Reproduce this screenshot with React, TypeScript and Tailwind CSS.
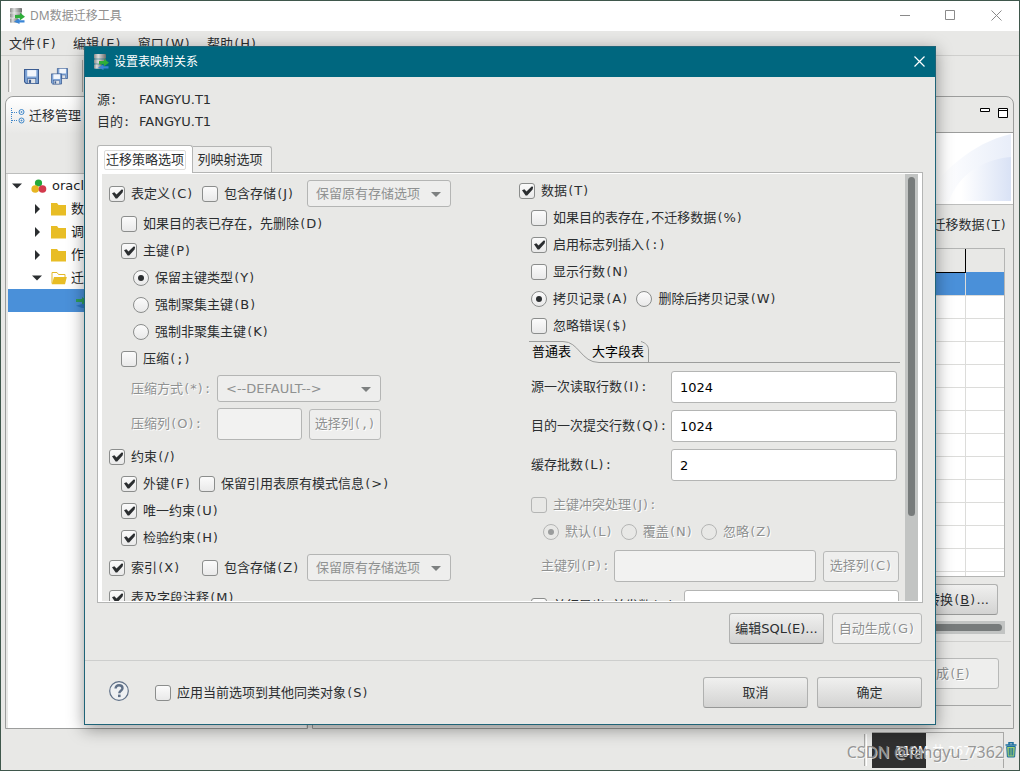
import React from "react";

/* Text with half-width punctuation set in the monospaced face. */
function T({ s, u }: { s: string; u?: boolean }) {
  return (
    <span className="whitespace-nowrap">
      {s.split(/([():,;]+)/).map((part, i) =>
        /^[():,;]+$/.test(part) ? (
          <span key={i} className="font-['DejaVu_Sans_Mono',monospace] text-[12px]">{part}</span>
        ) : u && /^[A-Z]$/.test(part) ? (
          <span key={i} className="underline">{part}</span>
        ) : (
          <React.Fragment key={i}>{part}</React.Fragment>
        )
      )}
    </span>
  );
}

const dim = "text-[#8f9191] [text-shadow:1px_1px_0_#fff]";

type BoxProps = { s: string; on?: boolean; off?: boolean; name?: string; className?: string };

function Check({ s, on, off, className = "" }: BoxProps) {
  return (
    <label className={`flex h-[27px] shrink-0 items-center gap-[6px] ${off ? dim : ""} ${className}`}>
      <span className="relative h-4 w-4 shrink-0">
        <input
          type="checkbox"
          defaultChecked={on}
          disabled={off}
          className="peer block h-4 w-4 appearance-none rounded-[3px] border border-[#8b8d8c] bg-linear-to-b from-[#fbfbfb] to-[#e9e9e9] disabled:border-[#b4b5b4] disabled:bg-none"
        />
        <svg viewBox="0 0 16 16" className="pointer-events-none absolute inset-0 hidden h-4 w-4 peer-checked:block">
          <path d="M3 7.200 L5.400 6.200 L7.500 8.400 L12.600 3.600 L14.200 3.800 L13.600 6.400 L8.200 12.600 L6.600 12.600 Z" fill="#2b2e30" />
        </svg>
      </span>
      <T s={s} />
    </label>
  );
}

function Radio({ s, on, off, name, className = "" }: BoxProps) {
  return (
    <label className={`flex h-[27px] shrink-0 items-center gap-[6px] ${off ? dim : ""} ${className}`}>
      <span className="relative h-4 w-4 shrink-0">
        <input
          type="radio"
          name={name}
          defaultChecked={on}
          disabled={off}
          className="peer block h-4 w-4 appearance-none rounded-full border border-[#8b8d8c] bg-linear-to-b from-[#fbfbfb] to-[#e9e9e9] disabled:border-[#b4b5b4] disabled:bg-none"
        />
        <span className="pointer-events-none absolute inset-[5px] hidden rounded-full bg-[#2b2e30] peer-checked:block peer-disabled:bg-[#9a9c9c]" />
      </span>
      <T s={s} />
    </label>
  );
}

function Combo({ value, label, id, className }: { value: string; label?: string; id?: string; className: string }) {
  return (
    <span className={`relative block h-[27px] ${className}`}>
      <select
        id={id}
        aria-label={label}
        disabled
        className="block h-full w-full appearance-none rounded-[3px] border border-[#b4b5b4] bg-[#eeeeed] pl-2 text-[13px] text-[#8f9191] opacity-100"
      >
        <option>{value}</option>
      </select>
      <svg viewBox="0 0 10 5" className="pointer-events-none absolute top-[12px] right-[10px] h-[5px] w-[10px]">
        <path d="M0 0h10L5 5z" fill="#7d8080" />
      </svg>
    </span>
  );
}

function Btn({ children, off, className = "" }: { children: React.ReactNode; off?: boolean; className?: string }) {
  return (
    <button
      type="button"
      disabled={off}
      className={`flex h-[31px] shrink-0 items-center justify-center rounded-[3px] border ${
        off
          ? `border-[#b8b9b8] bg-[#eeeeed] ${dim}`
          : "border-[#b0b1b0] border-b-[#979897] bg-linear-to-b from-[#f0f0ef] to-[#d3d3d2] text-[#2b2e30]"
      } ${className}`}
    >
      {children}
    </button>
  );
}

function Field({ id, label, value }: { id: string; label: string; value: string }) {
  return (
    <div className="flex h-8 items-center">
      <label htmlFor={id} className="w-[140px] shrink-0"><T s={label} /></label>
      <input id={id} defaultValue={value} className="h-8 w-[226px] rounded-[3px] border border-[#b4b5b4] bg-white px-2 text-black" />
    </div>
  );
}

function Logo() {
  return (
    <svg viewBox="0 0 16 16" className="h-4 w-4 shrink-0">
      <defs>
        <linearGradient id="metal" x1="0" x2="1" y1="0" y2="0">
          <stop offset="0" stopColor="#8b8d8c" />
          <stop offset=".35" stopColor="#dcdddd" />
          <stop offset="1" stopColor="#6a6c6b" />
        </linearGradient>
      </defs>
      <rect x="1" y="0" width="12" height="4.800" rx=".8" fill="url(#metal)" />
      <rect x="1" y="5.200" width="12" height="4.600" rx=".8" fill="url(#metal)" />
      <rect x="1" y="10.200" width="8" height="4.600" rx=".8" fill="url(#metal)" />
      <path d="M6 7h5V4.800L16 8.800 11 12.200V10.200H6z" fill="#2fae3a" />
      <path d="M15.500 12.200h-5V10.400L5 13.400l5.500 2.600v-1.400h5z" fill="#3b86d6" />
    </svg>
  );
}

function Disk({ x, y, k }: { x: number; y: number; k: number }) {
  return (
    <g transform={`translate(${x} ${y}) scale(${k})`}>
      <path d="M.5.5h13v13H2L.5 12z" fill="#7ea4d6" stroke="#3c5d92" />
      <rect x="3" y="1" width="8.500" height="6" fill="#f2f6fc" />
      <rect x="3.500" y="9" width="7.500" height="4.500" fill="#dfe3e8" stroke="#3c5d92" strokeWidth=".6" />
      <rect x="4.600" y="10" width="2" height="3" fill="#3c5d92" />
    </g>
  );
}

function Folder({ open }: { open?: boolean }) {
  return (
    <svg viewBox="0 0 16 14" className="h-[14px] w-4 shrink-0">
      {open ? (
        <>
          <path d="M1 12.500V1.500h5l1.500 2H14v2.500" fill="#fff" stroke="#e3b92a" />
          <path d="M3 6h12.800L14 13.200H.8z" fill="#e8bd25" />
        </>
      ) : (
        <path d="M0 1h6l1.500 2H15v10.500H0z" fill="#e8bd25" />
      )}
    </svg>
  );
}

function TreeRow({ name, open, indent, icon }: { name: string; open?: boolean; indent?: boolean; icon: React.ReactNode }) {
  return (
    <li className={`flex h-[23px] items-center text-[#1c1e1f] ${indent ? "pl-6" : "pl-1"}`}>
      <svg viewBox="0 0 10 10" className="h-[10px] w-[10px] shrink-0">
        {open ? <path d="M0 2.500h10L5 7.500z" fill="#2b2e30" /> : <path d="M3 0v10l5-5z" fill="#2b2e30" />}
      </svg>
      <span className="ml-[9px] flex items-center gap-1">
        {icon}
        <span className="whitespace-nowrap">{name}</span>
      </span>
    </li>
  );
}

function MainWindow() {
  return (
    <div className="flex min-h-screen flex-col border border-[#3f574c] bg-[#e8e8e6]">
      <header className="flex h-[30px] items-center bg-white pl-2 text-[12px] text-[#8f8f8f]">
        <Logo />
        <span className="ml-[5px] flex-1 font-['Noto_Sans','Noto_Sans_CJK_SC',sans-serif]">DM数据迁移工具</span>
        <svg viewBox="0 0 102 12" className="mr-[17px] h-3 w-[102px]" fill="none" stroke="#8a8a8a">
          <path d="M0 5.500h10M45.500 .5h9v9h-9zM91.500 .5l10 10M101.500 .5l-10 10" />
        </svg>
      </header>
      <nav className="flex h-[25px] items-center gap-4 border-b border-[#cfcfcd] pt-px pl-2">
        {["文件(F)", "编辑(E)", "窗口(W)", "帮助(H)"].map((m) => (
          <a key={m} href="#" className="text-[#2b2e30]"><T s={m} /></a>
        ))}
      </nav>
      <div className="flex h-10 items-center pl-[7px]">
        <span className="h-8 w-[3px] border-r border-l border-r-white border-l-[#a8a8a6]" />
        <button type="button" aria-label="保存" className="ml-[13px]">
          <svg viewBox="0 0 14 14" className="h-[15px] w-[15px]"><Disk x={0} y={0} k={1} /></svg>
        </button>
        <button type="button" aria-label="全部保存" className="ml-3">
          <svg viewBox="0 0 17 17" className="h-[17px] w-[17px]"><Disk x={6} y={0} k={0.78} /><Disk x={0} y={5.5} k={0.78} /></svg>
        </button>
        <span className="ml-[14px] h-8 w-[3px] border-r border-l border-r-white border-l-[#a8a8a6]" />
      </div>

      <main className="flex flex-1 gap-1 pr-[5px] pl-1">
        <aside className="flex w-[303px] shrink-0 flex-col rounded-tl-[8px] border border-[#9c9d9c]">
          <div className="flex h-[37px] shrink-0 items-center gap-1 rounded-tl-[8px] bg-linear-to-b from-white to-[#e8e8e6] pl-1">
            <svg viewBox="0 0 15 16" className="h-4 w-[15px] shrink-0" fill="none" stroke="#3f87c9">
              <path d="M1.500 0v15M2 4.500h6M2 12.500h6" strokeDasharray="1 1" />
              <circle cx="11.500" cy="4" r="2.500" />
              <circle cx="11.500" cy="12.500" r="2.500" />
              <path d="M10.500 4h2M11.500 3v2M10.500 12.500h2M11.500 11.500v2" strokeWidth=".7" />
            </svg>
            <span>迁移管理</span>
          </div>
          <div className="h-10 shrink-0 border-b border-[#bdbebd]" />
          <ul className="mr-px ml-[2px] flex-1 bg-white">
            <TreeRow
              name="oracle"
              open
              icon={
                <svg viewBox="0 0 16 16" className="mr-px h-4 w-4 shrink-0">
                  <circle cx="7.500" cy="5" r="3.600" fill="#24a83b" />
                  <circle cx="4.200" cy="11" r="3.800" fill="#e6b522" />
                  <circle cx="11.500" cy="11" r="3.800" fill="#d33a4c" />
                </svg>
              }
            />
            <TreeRow name="数据" indent icon={<Folder />} />
            <TreeRow name="调度" indent icon={<Folder />} />
            <TreeRow name="作业" indent icon={<Folder />} />
            <TreeRow name="迁移" indent open icon={<Folder open />} />
            <li className="flex h-[23px] items-center bg-[#4a90d9] pl-16">
              <svg viewBox="0 0 16 16" className="h-4 w-4 shrink-0">
                <path d="M4 6h6V4l6 4.500-6 3V9H4z" fill="#2f9e5a" />
                <path d="M15 11h-5l-6 1.800 6 2.200h5z" fill="#2f78c4" />
              </svg>
            </li>
          </ul>
        </aside>

        <section className="flex min-w-0 flex-1 flex-col rounded-tr-[8px] border border-[#9c9d9c]">
          <div className="flex h-9 shrink-0 items-center justify-end border-b border-[#9c9d9c] pr-[5px] pb-[3px]">
            <svg viewBox="0 0 28 12" className="h-3 w-7" fill="#fff" stroke="#000">
              <path d="M.5 1.500h9v3h-9zM18.500 1.500h9v9h-9zM18.500 3.500h9" />
            </svg>
          </div>
          <div className="flex h-[72px] shrink-0 justify-end border-b border-[#bdbebd] bg-white pr-[2px]">
            <svg viewBox="0 0 90 68" className="h-[68px] w-[90px]">
              <defs>
                <linearGradient id="sweep" x1="0" x2="1">
                  <stop offset=".2" stopColor="#fff" />
                  <stop offset="1" stopColor="#d9e2f5" />
                </linearGradient>
              </defs>
              <path d="M0 68C20 40 50 10 90 1V68z" fill="url(#sweep)" opacity=".6" />
              <path d="M28 68C38 40 64 26 90 24V68z" fill="url(#sweep)" />
            </svg>
          </div>
          <div className="flex h-[43px] shrink-0 items-center justify-end pr-[6px] pb-[3px] text-[#2b2e30]"><T s="迁移数据(T)" u /></div>
          <div className="mr-2 ml-1 h-[329px] overflow-hidden border border-[#b4b5b4] bg-white">
            <table className="w-full table-fixed border-collapse">
              <thead>
                <tr className="h-[23px] bg-[#e8e8e6]">
                  <th className="border-r border-b border-black" />
                  <th className="w-[39px]" />
                </tr>
              </thead>
              <tbody>
                {Array.from({ length: 14 }, (_, i) => (
                  <tr key={i} className={`h-[23px] border-b border-[#dcdcda] ${i === 0 ? "bg-[#4a90d9]" : ""}`}>
                    <td className="border-r border-[#dcdcda]" />
                    <td />
                  </tr>
                ))}
              </tbody>
            </table>
          </div>
          <div className="mt-[7px] flex justify-end pr-[15px]"><Btn className="w-20"><T s="转换(B)..." u /></Btn></div>
          <div className="mt-[6px] mr-2 h-[13px] bg-[#c2c4c3] py-[3px] pr-[3px]"><div className="h-[7px] rounded-full bg-[#777b7b]" /></div>
          <div className="mt-[7px] mr-[2px] border-t border-[#cfcfcd]" />
          <div className="mt-4 flex justify-end pr-[14px]"><Btn off className="w-[104px]"><T s="完成(F)" u /></Btn></div>
          <div className="mt-4 mr-[2px] h-[22px] border-t border-[#a5a6a5]" />
        </section>
      </main>

      <footer className="flex h-[41px] items-center justify-end pt-px">
        <span className="mr-[5px] h-8 w-[3px] border-r border-l border-r-white border-l-[#a8a8a6]" />
        <div className="flex h-9 w-[132px] items-center border-t border-r border-[#a8a8a6] bg-linear-to-r from-[#303030] from-[54px] to-[#e8e8e6] to-[54px] pl-[23px] text-[12px] text-white">
          110M 共 267M
        </div>
        <svg viewBox="0 0 12 16" className="mr-[2px] ml-px h-4 w-3" fill="none" stroke="#1d6f9e">
          <path d="M.5 3h11M4 2.500V.8h4v1.700" strokeWidth="1.500" />
          <path d="M1.700 4.500h8.600L9.600 15H2.400z" fill="#9fd06f" />
          <path d="M4.300 6v7.500M6 6v7.500M7.700 6v7.500" />
        </svg>
      </footer>
    </div>
  );
}

function LeftOptions() {
  return (
    <div className="w-[410px] shrink-0 pt-[6px] pl-[7px]">
      <div className="flex">
        <Check s="表定义(C)" on className="w-[93px]" />
        <Check s="包含存储(J)" className="w-[105px]" />
        <Combo value="保留原有存储选项" label="表存储选项" className="w-36" />
      </div>
      <div className="mt-[3px] pl-3">
        <Check s="如果目的表已存在，先删除(D)" />
        <Check s="主键(P)" on />
        <div className="pl-3">
          <Radio s="保留主键类型(Y)" name="pk" on />
          <Radio s="强制聚集主键(B)" name="pk" />
          <Radio s="强制非聚集主键(K)" name="pk" />
        </div>
        <Check s="压缩(;)" />
        <div className="mt-[3px] flex items-center pl-[10px]">
          <label htmlFor="zip-mode" className={`w-[86px] ${dim}`}><T s="压缩方式(*):" /></label>
          <Combo id="zip-mode" value="<--DEFAULT-->" className="w-[164px]" />
        </div>
        <div className="mt-[6px] flex items-center pl-[10px]">
          <label htmlFor="zip-col" className={`w-[86px] ${dim}`}><T s="压缩列(O):" /></label>
          <input id="zip-col" disabled className="h-8 w-[85px] rounded-[3px] border border-[#b4b5b4] bg-[#f2f2f1]" />
          <Btn off className="ml-[7px] w-[72px]"><T s="选择列(,)" /></Btn>
        </div>
      </div>
      <Check s="约束(/)" on className="mt-[3px]" />
      <div className="pl-3">
        <div className="flex gap-2">
          <Check s="外键(F)" on />
          <Check s="保留引用表原有模式信息(>)" />
        </div>
        <Check s="唯一约束(U)" on />
        <Check s="检验约束(H)" on />
      </div>
      <div className="mt-[3px] flex">
        <Check s="索引(X)" on className="w-[93px]" />
        <Check s="包含存储(Z)" className="w-[105px]" />
        <Combo value="保留原有存储选项" label="索引存储选项" className="w-36" />
      </div>
      <Check s="表及字段注释(M)" on className="mt-[3px]" />
    </div>
  );
}

function RightOptions() {
  return (
    <div className="min-w-0 flex-1 pt-[3px] pl-[7px]">
      <Check s="数据(T)" on />
      <div className="pl-3">
        <Check s="如果目的表存在,不迁移数据(%)" />
        <Check s="启用标志列插入(:)" on />
        <Check s="显示行数(N)" />
        <div className="flex gap-2">
          <Radio s="拷贝记录(A)" name="copy" on />
          <Radio s="删除后拷贝记录(W)" name="copy" />
        </div>
        <Check s="忽略错误($)" />
        <div role="tablist" className="relative -ml-[2px] mt-[2px] flex h-[22px] w-[371px] items-center text-black">
          <svg viewBox="0 0 371 22" className="absolute inset-0 h-[22px] w-[371px]" fill="none" stroke="#9c9d9c">
            <path d="M0 .5H34C50 .5 52 21.500 70 21.500H371" />
            <path d="M112 .5C117 2 119.500 5 119.500 9V21" />
          </svg>
          <button type="button" role="tab" className="relative ml-[3px]">普通表</button>
          <button type="button" role="tab" className="relative ml-[21px]">大字段表</button>
        </div>
        <div className="mt-[8px] flex flex-col gap-[7px]">
          <Field id="read-rows" label="源一次读取行数(I):" value="1024" />
          <Field id="commit-rows" label="目的一次提交行数(Q):" value="1024" />
          <Field id="batches" label="缓存批数(L):" value="2" />
        </div>
        <Check s="主键冲突处理(J):" off className="mt-[10px]" />
        <div className="flex gap-2 pl-3">
          <Radio s="默认(L)" name="conflict" on off />
          <Radio s="覆盖(N)" name="conflict" off />
          <Radio s="忽略(Z)" name="conflict" off />
        </div>
        <div className="mt-[5px] flex items-center pl-[10px]">
          <label htmlFor="pk-col" className={`w-[73px] shrink-0 ${dim}`}><T s="主键列(P):" /></label>
          <input id="pk-col" disabled className="h-8 w-[202px] rounded-[3px] border border-[#b4b5b4] bg-[#f2f2f1]" />
          <Btn off className="ml-[7px] w-[76px]"><T s="选择列(C)" /></Btn>
        </div>
        <div className="mt-2 flex h-8 items-center">
          <Check s="并行导出,并发数(X):" className="w-[153px]" />
          <input aria-label="并发数" className="h-8 w-[215px] rounded-[3px] border border-[#b4b5b4] bg-white px-2" />
        </div>
      </div>
    </div>
  );
}

function MappingDialog() {
  return (
    <div
      role="dialog"
      aria-label="设置表映射关系"
      className="absolute inset-x-[84px] inset-y-[46px] flex flex-col border border-[#1f6478] bg-[#e8e8e6] shadow-[0_4px_16px_rgba(0,0,0,0.4)]"
    >
      <div className="flex h-[30px] shrink-0 items-center bg-[#00677f] pl-2 text-[12px] text-white">
        <Logo />
        <span className="ml-[5px] flex-1">设置表映射关系</span>
        <button type="button" aria-label="关闭" className="mr-[10px] pb-px">
          <svg viewBox="0 0 11 11" className="h-[11px] w-[11px]" stroke="#fff" strokeWidth="1.200">
            <path d="M.5.5l10 10M10.500.5l-10 10" />
          </svg>
        </button>
      </div>

      <dl className="mt-3 grid grid-cols-[42px_1fr] pl-3 leading-[21px]">
        <dt><T s="源:" /></dt>
        <dd>FANGYU.T1</dd>
        <dt><T s="目的:" /></dt>
        <dd>FANGYU.T1</dd>
      </dl>

      <div role="tablist" className="mt-[11px] ml-3 flex h-7 shrink-0 items-end">
        <button type="button" role="tab" className="relative z-10 -mb-px flex h-7 w-24 items-center justify-center rounded-t-[3px] border border-b-0 border-[#b4b5b4] bg-white">
          <span className="rounded-[2px] border border-[#dcdcda] px-px leading-[18px]">迁移策略选项</span>
        </button>
        <button type="button" role="tab" className="h-[26px] w-[79px] rounded-tr-[3px] border border-b-0 border-l-0 border-[#b4b5b4] bg-[#efefee] pr-1">列映射选项</button>
      </div>

      <div className="mr-3 ml-3 flex min-h-0 flex-1 border border-[#b4b5b4] bg-white py-px pr-1 pl-1">
        <div className="flex min-w-0 flex-1 overflow-hidden bg-[#e8e8e6]">
          <LeftOptions />
          <RightOptions />
        </div>
        <div className="w-[13px] shrink-0 bg-[#c2c4c3] px-[3px] pt-[3px]">
          <div className="h-[339px] rounded-full bg-[#777b7b]" />
        </div>
      </div>

      <div className="mt-[10px] flex shrink-0 justify-end gap-2 pr-[13px]">
        <Btn className="w-[95px]">编辑SQL(E)...</Btn>
        <Btn off className="w-[90px]"><T s="自动生成(G)" /></Btn>
      </div>

      <div className="mt-4 flex h-16 shrink-0 items-center border-t border-[#cdcecd] pr-[13px] pl-6">
        <button type="button" aria-label="帮助" className="pb-[3px]">
          <svg viewBox="0 0 20 20" className="h-5 w-5">
            <circle cx="10" cy="10" r="9.300" fill="#eef0f2" stroke="#5f7087" strokeWidth="1.200" />
            <path d="M6.600 7.600C6.600 5.300 8 4.200 10 4.200s3.500 1.200 3.500 3c0 2.600-3.200 2.500-3.200 5" fill="none" stroke="#5f7087" strokeWidth="2.400" />
            <rect x="9" y="13.600" width="2.600" height="2.500" fill="#5f7087" />
          </svg>
        </button>
        <Check s="应用当前选项到其他同类对象(S)" className="ml-[26px]" />
        <div className="ml-auto flex gap-[9px]">
          <Btn className="w-[105px]">取消</Btn>
          <Btn className="w-[105px]">确定</Btn>
        </div>
      </div>
    </div>
  );
}

export default function App() {
  return (
    <div className="relative min-h-screen overflow-hidden font-['DejaVu_Sans','Noto_Sans_CJK_SC',sans-serif] text-[13px] leading-[18px] text-[#2b2e30]">
      <MainWindow />
      <MappingDialog />
      <div className="absolute right-[16px] bottom-[8px] font-['Noto_Sans',sans-serif] text-[16px] leading-[22px] text-[#8b8b8b]/90 [text-shadow:1px_1px_0_rgba(255,255,255,0.7)]">
        CSDN @fangyu_7362
      </div>
    </div>
  );
}
